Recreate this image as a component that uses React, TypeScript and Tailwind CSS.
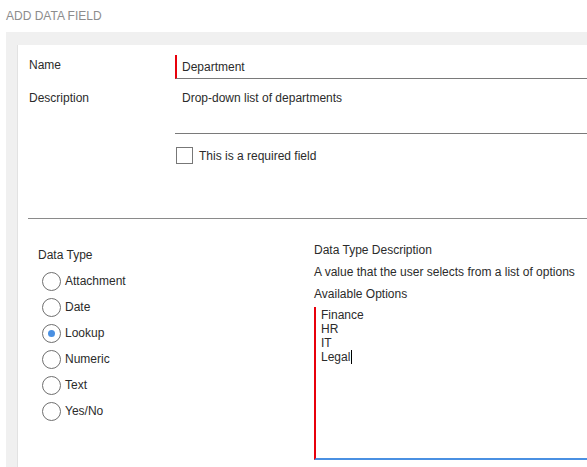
import React from 'react';

const dataTypes = ['Attachment', 'Date', 'Lookup', 'Numeric', 'Text', 'Yes/No'];

function Radio({ label, checked }: { label: string; checked?: boolean }) {
  return (
    <div className="flex h-[26px] items-center">
      <span className="ml-[4px] flex h-[19px] w-[19px] items-center justify-center rounded-full border border-[#6f6f6f] bg-white">
        {checked && <span className="h-[7px] w-[7px] rounded-full bg-[#4a90e2]" />}
      </span>
      <span className="ml-[4px]">{label}</span>
    </div>
  );
}

export default function App() {
  return (
    <div className="h-[467px] overflow-hidden bg-white font-['Liberation_Sans',sans-serif] text-[12px] leading-[14px] text-[#2b2b2b]">
      <div className="h-[32px] pl-[6px] pt-[9px] text-[#8c8c8c]">ADD DATA FIELD</div>

      <div className="ml-[6px] h-[435px] bg-[#f0f0f0] pl-[11px] pt-[13px]">
        <div className="h-full border-l border-[#e2e2e2] bg-white pl-[10px] pt-[10px]">
          {/* name */}
          <div className="flex">
            <div className="w-[147px] pl-[1px] pt-[3px]">Name</div>
            <div className="flex h-[24px] flex-1 items-center border-b border-l-2 border-b-[#7a7a7a] border-l-[#e8000b] pl-[5px]">
              Department
            </div>
          </div>

          {/* description */}
          <div className="mt-[9px] flex">
            <div className="w-[147px] pl-[1px] pt-[3px]">Description</div>
            <div className="h-[46px] flex-1 border-b border-[#7a7a7a] pl-[7px] pt-[3px]">
              Drop-down list of departments
            </div>
          </div>

          <div className="mt-[13px] flex items-center pl-[148px]">
            <span className="h-[17px] w-[17px] border border-[#777]" />
            <span className="ml-[6px]">This is a required field</span>
          </div>

          <div className="mt-[54px] border-t border-[#8a8a8a]" />

          <div className="flex">
            <div className="w-[286px] pl-[10px] pt-[29px]">
              <div>Data Type</div>
              <div className="mt-[6px]">
                {dataTypes.map((t) => (
                  <Radio key={t} label={t} checked={t === 'Lookup'} />
                ))}
              </div>
            </div>
            <div className="flex-1 pt-[24px]">
              <div>Data Type Description</div>
              <div className="mt-[8px]">A value that the user selects from a list of options</div>
              <div className="mt-[8px]">Available Options</div>
              <div className="mt-[6px] h-[153px] border-b-2 border-l-2 border-b-[#4a90e2] border-l-[#e8000b] pl-[5px] pt-[1px]">
                <div>Finance</div>
                <div>HR</div>
                <div>IT</div>
                <div className="flex items-center">
                  Legal
                  <span className="ml-[1px] inline-block h-[14px] w-px bg-black" />
                </div>
              </div>
            </div>
          </div>
        </div>
      </div>
    </div>
  );
}
